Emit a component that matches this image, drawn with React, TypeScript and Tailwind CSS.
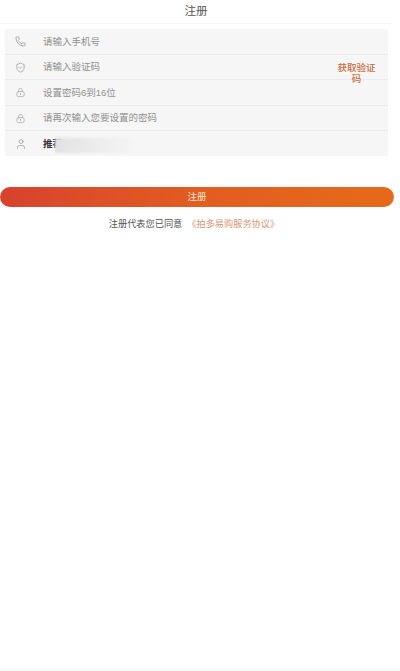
import { Phone, ShieldCheck, User } from "lucide-react";

const cjk = { fontFamily: '"Liberation Sans", "Noto Sans CJK SC", sans-serif' };

function LockIcon() {
  return (
    <svg width="11" height="11" viewBox="0 0 24 24" fill="none" stroke="#a6a6a6" strokeWidth="1.6" strokeLinecap="round" strokeLinejoin="round">
      <path d="M8 10V7a4 4 0 0 1 8 0v3" />
      <rect x="4" y="10" width="16" height="11" rx="4" />
      <path d="M12 14v3" />
    </svg>
  );
}

function Row({ icon, text, last, h }: { icon: React.ReactNode; text: string; last?: boolean; h: string }) {
  return (
    <div className={`flex items-center ${h} ${last ? "" : "border-b border-[#ebebeb]"}`}>
      <div className="w-[38px] pl-[10px] flex items-center shrink-0">{icon}</div>
      <span className="text-[9.5px] text-[#909090] leading-none">{text}</span>
    </div>
  );
}

export default function App() {
  return (
    <div style={cjk} className="w-[400px] h-[671px] bg-white flex flex-col overflow-hidden">
      <div className="h-[24px] w-[392px] border-b border-[#f5f5f5] flex items-center justify-center text-[11.5px] text-[#555] shrink-0">
        注册
      </div>
      <div className="ml-[5px] w-[383px] mt-[5px] h-[127px] bg-[#f6f6f6] relative flex flex-col shrink-0">
        <Row h="h-[26px]" icon={<Phone size={11} strokeWidth={1.4} color="#8a8a8a" />} text="请输入手机号" />
        <Row h="h-[25px]" icon={<ShieldCheck size={11} strokeWidth={1.4} color="#8a8a8a" />} text="请输入验证码" />
        <Row h="h-[26px]" icon={<LockIcon />} text="设置密码6到16位" />
        <Row h="h-[25px]" icon={<LockIcon />} text="请再次输入您要设置的密码" />
        <div className="flex items-center h-[25px] relative">
          <div className="w-[38px] pl-[10px] flex items-center shrink-0">
            <User size={12} strokeWidth={1.2} color="#8a8a8a" />
          </div>
          <span className="text-[9.5px] text-[#333] leading-none font-bold">推荐</span>
          <div className="absolute left-[50px] top-[7px] w-[85px] h-[15px] bg-gradient-to-r from-[#e2e2e2] to-[#f6f6f6] blur-[1px]" />
        </div>
        <div className="absolute left-[331px] top-[33px] w-[41px] text-center text-[9.5px] leading-[11px] font-medium text-[#c96f3f]">
          获取验证码
        </div>
      </div>
      <div className="mt-[31px] h-[20px] w-[394px] shrink-0 rounded-full bg-gradient-to-r from-[#d8412e] via-[#e15d20] to-[#e66a1a] flex items-center justify-center text-[9.5px] text-[#fbe8dc]">
        注册
      </div>
      <div className="mt-[10px] w-[388px] text-center text-[9.2px] leading-[14px] text-[#555] shrink-0">
        注册代表您已同意<span className="text-[#d99575] ml-[5px]">《拍多易购服务协议》</span>
      </div>
      <div className="mt-auto h-[2px] bg-[#f9f9f9] shrink-0" />
    </div>
  );
}
